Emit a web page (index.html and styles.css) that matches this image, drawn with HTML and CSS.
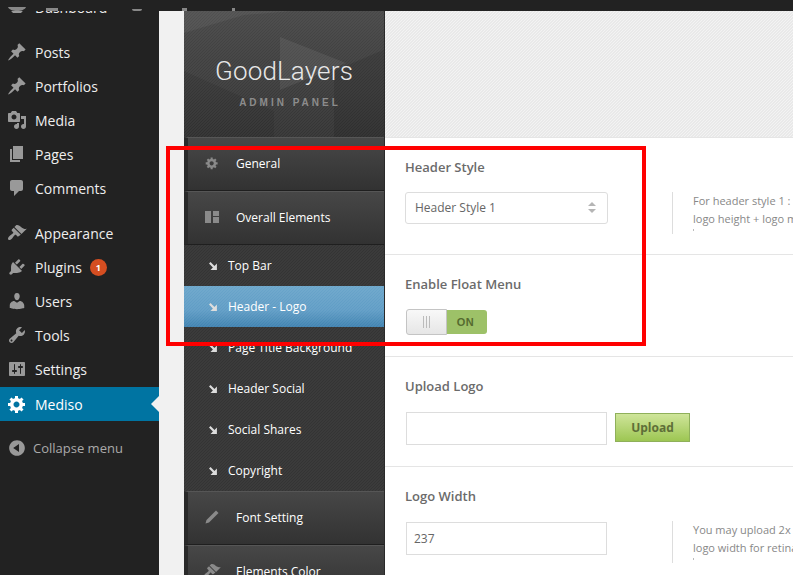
FILE: index.html
```html
<!DOCTYPE html>
<html lang="en">
<head>
  <meta charset="UTF-8" />
  <title>GoodLayers Admin Panel</title>
  <link rel="stylesheet" href="styles.css">
</head>
<body>
  <svg class="defs" width="0" height="0">
    <symbol id="i-pin" viewBox="0 0 20 20"><path d="M10.44 3.02l1.82-1.82 6.36 6.35-1.83 1.82c-1.05-.68-2.48-.57-3.41.36l-.75.75c-.92.93-1.04 2.35-.35 3.41l-1.83 1.82-2.41-2.41-2.8 2.79c-.42.42-3.38 2.71-3.8 2.29s1.86-3.39 2.28-3.81l2.79-2.79L4.1 9.36l1.83-1.82c1.05.69 2.48.57 3.4-.36l.75-.75c.93-.92 1.05-2.35.36-3.41z"/></symbol>
    <symbol id="i-gear" viewBox="0 0 20 20"><path fill-rule="evenodd" d="M18 12h-2.18c-.17.7-.44 1.35-.81 1.93l1.54 1.54-2.1 2.1-1.54-1.54c-.58.36-1.23.63-1.91.79V19H8v-2.18c-.68-.16-1.33-.43-1.91-.79l-1.54 1.54-2.12-2.12 1.54-1.54c-.36-.58-.63-1.23-.79-1.91H1V9.03h2.17c.16-.7.44-1.35.8-1.94L2.43 5.55l2.1-2.1 1.54 1.54c.58-.37 1.24-.64 1.93-.81V2h3v2.18c.68.16 1.33.43 1.91.79l1.54-1.54 2.12 2.12-1.54 1.54c.36.59.64 1.24.8 1.94H18V12zm-8.5 1.5c1.66 0 3-1.34 3-3s-1.34-3-3-3-3 1.34-3 3 1.34 3 3 3z"/></symbol>
    <symbol id="i-arrow" viewBox="0 0 8 8"><path d="M0 1.5L1.5 0l4 4L7.9 1.6V8H1.5l2.4-2.4z"/></symbol>
    <symbol id="i-brush" viewBox="0 0 20 20"><path d="M14.5 11L7.4 4l1.5-1.5c.5-.6 2.3-.5 3.5.3s1.4 1.3 2.9 2.1c1.2.6 2.5 1.3 4.5.9zm-.7.8L6.7 4.7 4.9 6.5c-.4.4-.4 1 0 1.4L6 8.9c.4.4.4 1 0 1.4-1 1-2.2 1.600-3.200 2.500-1.400 1.300-2.400 2.900-1.400 3.900s2.600 0 3.900-1.400c.9-1 1.500-2.200 2.500-3.200.4-.4 1-.4 1.400 0l1 1.100c.4.4 1 .4 1.400 0z"/></symbol>
  </svg>

  <header class="topbar">
    <svg class="top-icon top-wp" width="18" height="4" viewBox="0 0 18 4"><path d="M0 0h18c-1 2.500-4.500 4-9 4S1 2.500 0 0z"/></svg>
    <span class="top-icon top-home"></span>
    <span class="top-icon top-bubble"></span>
    <span class="top-icon top-pen"></span>
    <span class="top-icon top-plus"></span>
  </header>

  <div class="wrap">
    <nav class="sidebar">
      <ul class="menu">
        <li class="menu-first"><svg class="ico" viewBox="0 0 20 20"><path d="M3 10a7 7 0 0 1 14 0c0 2.500-1.300 4.600-3 6H6c-1.700-1.400-3-3.500-3-6z"/></svg><span>Dashboard</span></li>
        <li class="group-start"><svg class="ico"><use href="#i-pin"/></svg><span>Posts</span></li>
        <li><svg class="ico"><use href="#i-pin"/></svg><span>Portfolios</span></li>
        <li><svg class="ico" viewBox="0 0 20 20"><path fill-rule="evenodd" d="M13 11V4c0-.55-.45-1-1-1h-1.670L9 1H5L3.670 3H2c-.55 0-1 .45-1 1v7c0 .55.45 1 1 1h10c.55 0 1-.45 1-1zM7 4.500c1.380 0 2.500 1.120 2.500 2.500S8.380 9.500 7 9.500 4.500 8.380 4.500 7 5.620 4.500 7 4.500zM14 6h5v10.500c0 1.380-1.120 2.500-2.500 2.500S14 17.880 14 16.500s1.120-2.500 2.500-2.500c.17 0 .34.02.5.05V9h-3V6zm-4 8.050V13h2v3.500c0 1.380-1.120 2.500-2.500 2.500S7 17.880 7 16.500 8.120 14 9.500 14c.17 0 .34.02.5.05z"/></svg><span>Media</span></li>
        <li><svg class="ico" viewBox="0 0 20 20"><path d="M6 15V2h10v13H6zm-1 1h8v2H3V5h2v11z"/></svg><span>Pages</span></li>
        <li><svg class="ico" viewBox="0 0 20 20"><path d="M5 2h9c1.100 0 2 .9 2 2v7c0 1.100-.9 2-2 2h-2l-5 5v-5H5c-1.100 0-2-.9-2-2V4c0-1.100.9-2 2-2z"/></svg><span>Comments</span></li>
        <li class="group-start"><svg class="ico"><use href="#i-brush"/></svg><span>Appearance</span></li>
        <li><svg class="ico" viewBox="0 0 20 20"><path d="M13.110 4.360L9.870 7.600 8 5.730l3.240-3.240c.35-.34 1.050-.2 1.560.32.52.51.66 1.210.31 1.550zm-8 1.770l.91-1.120 9.010 9.010-1.190.84c-.71.71-2.630 1.160-3.820 1.160H6.140L4.900 17.260c-.59.59-1.540.59-2.120 0-.59-.58-.59-1.530 0-2.120l1.240-1.240v-3.880c0-1.130.4-3.190 1.090-3.890zm7.260 3.970l3.240-3.240c.34-.35 1.040-.21 1.550.31.52.51.66 1.210.31 1.550l-3.240 3.250z"/></svg><span>Plugins</span><b class="badge">1</b></li>
        <li><svg class="ico" viewBox="0 0 20 20"><path d="M10 9.250c-2.270 0-2.730-3.440-2.730-3.440C7 4.020 7.820 2 9.970 2c2.160 0 2.980 2.020 2.710 3.810 0 0-.41 3.440-2.680 3.440zm0 2.570L12.720 10c2.390 0 4.520 2.330 4.520 4.530v2.490s-3.650 1.130-7.240 1.130c-3.650 0-7.240-1.130-7.240-1.130v-2.490c0-2.250 1.940-4.480 4.470-4.480z"/></svg><span>Users</span></li>
        <li><svg class="ico" viewBox="0 0 20 20"><path fill-rule="evenodd" d="M16.680 9.770c-1.340 1.340-3.300 1.670-4.950.99l-5.410 6.520c-.99.99-2.590.99-3.580 0s-.99-2.590 0-3.570l6.520-5.420c-.68-1.650-.35-3.610.99-4.950 1.280-1.280 3.120-1.620 4.720-1.060l-2.890 2.890 2.820 2.820 2.860-2.870c.53 1.580.18 3.390-1.080 4.650zM3.810 16.210c.4.39 1.040.39 1.430 0 .4-.4.4-1.040 0-1.430-.39-.4-1.030-.4-1.430 0-.39.39-.39 1.030 0 1.430z"/></svg><span>Tools</span></li>
        <li><svg class="ico" viewBox="0 0 20 20"><path fill-rule="evenodd" d="M18 16V4c0-.55-.45-1-1-1H3c-.55 0-1 .45-1 1v12c0 .55.45 1 1 1h14c.55 0 1-.45 1-1zM8 11h1c.55 0 1 .45 1 1s-.45 1-1 1H8v1.500c0 .28-.22.5-.5.5s-.5-.22-.5-.5V13H6c-.55 0-1-.45-1-1s.45-1 1-1h1V5.500c0-.28.22-.5.5-.5s.5.22.5.5V11zm5-2h-1c-.55 0-1-.45-1-1s.45-1 1-1h1V5.500c0-.28.22-.5.5-.5s.5.22.5.5V7h1c.55 0 1 .45 1 1s-.45 1-1 1h-1v5.500c0 .28-.22.5-.5.5s-.5-.22-.5-.5V9z"/></svg><span>Settings</span></li>
        <li class="current"><svg class="ico"><use href="#i-gear"/></svg><span>Mediso</span></li>
        <li class="collapse"><svg class="ico" viewBox="0 0 20 20"><path fill-rule="evenodd" d="M10 2.160c4.330 0 7.840 3.510 7.840 7.840s-3.510 7.840-7.840 7.840S2.160 14.330 2.160 10 5.710 2.160 10 2.160zm2 11.720V6.120L6.180 9.970z"/></svg><span>Collapse menu</span></li>
      </ul>
    </nav>

    <div class="panel">
      <aside class="panel-nav">
        <div class="logo">
          <svg class="logo-bg" width="201" height="126" viewBox="0 0 201 126">
            <path d="M0 22L60 4 110 0H0z" fill="#fff" opacity=".05"/>
            <path d="M96 26l66 26-66 27z" fill="#fff" opacity=".07"/>
            <path d="M0 60l90 40v26H0z" fill="#000" opacity=".08"/>
            <path d="M150 60l51-22v88h-51z" fill="#000" opacity=".1"/>
          </svg>
          <div class="logo-name">GoodLayers</div>
          <div class="logo-sub">ADMIN PANEL</div>
        </div>

        <div class="nav-head">
          <svg class="nav-ico"><use href="#i-gear"/></svg><span>General</span>
        </div>
        <div class="nav-head">
          <svg class="nav-ico" viewBox="0 0 14 14"><path d="M0 1h6v12H0zM8 1h6v5H8zM8 7h6v6H8z"/></svg><span>Overall Elements</span>
        </div>
        <div class="nav-sub"><svg class="sub-ico"><use href="#i-arrow"/></svg><span>Top Bar</span></div>
        <div class="nav-sub active"><svg class="sub-ico"><use href="#i-arrow"/></svg><span>Header - Logo</span></div>
        <div class="nav-sub"><svg class="sub-ico"><use href="#i-arrow"/></svg><span>Page Title Background</span></div>
        <div class="nav-sub"><svg class="sub-ico"><use href="#i-arrow"/></svg><span>Header Social</span></div>
        <div class="nav-sub"><svg class="sub-ico"><use href="#i-arrow"/></svg><span>Social Shares</span></div>
        <div class="nav-sub"><svg class="sub-ico"><use href="#i-arrow"/></svg><span>Copyright</span></div>
        <div class="nav-head">
          <svg class="nav-ico" viewBox="0 0 14 14"><path d="M11 .5L13.500 3 4 12.500 .5 13.500 1.500 10z"/></svg><span>Font Setting</span>
        </div>
        <div class="nav-head">
          <svg class="nav-ico nav-ico-big"><use href="#i-brush"/></svg><span>Elements Color</span>
        </div>
      </aside>

      <main class="panel-main">
        <div class="panel-top"></div>

        <section class="row">
          <h3>Header Style</h3>
          <div class="row-body">
            <div class="control">
              <div class="select">
                <span>Header Style 1</span>
                <svg class="select-arrows" width="8" height="11" viewBox="0 0 8 11"><path d="M4 0l4 4H0zM0 7h8l-4 4z"/></svg>
              </div>
            </div>
            <div class="desc">For header style 1 :<br>logo height + logo margin<i class="tick"></i></div>
          </div>
        </section>

        <section class="row row-toggle">
          <h3>Enable Float Menu</h3>
          <div class="toggle">
            <div class="toggle-knob"><i></i><i></i><i></i></div>
            <div class="toggle-on">ON</div>
          </div>
        </section>

        <section class="row row-toggle">
          <h3>Upload Logo</h3>
          <div class="upload">
            <input class="text-input" type="text">
            <button class="upload-btn">Upload</button>
          </div>
        </section>

        <section class="row">
          <h3>Logo Width</h3>
          <div class="row-body row-body-input">
            <div class="control">
              <input class="text-input" type="text" value="237">
            </div>
            <div class="desc">You may upload 2x<br>logo width for retina<i class="tick"></i></div>
          </div>
        </section>
      </main>
    </div>
  </div>

  <div class="highlight"></div>
</body>
</html>
```

FILE: styles.css
```css
* {
  box-sizing: border-box;
}

html,
body {
  height: 100%;
}

body {
  margin: 0;
  height: 575px;
  overflow: hidden;
  position: relative;
  background: #f1f1f1;
  font-family: 'Open Sans', sans-serif;
  color: #666;
}

.defs {
  position: absolute;
}

/* top bar, only the bottom of it is still on screen */
.topbar {
  height: 11px;
  background: #222;
  position: relative;
  z-index: 5;
  overflow: hidden;
}

.top-icon {
  position: absolute;
  bottom: 0;
  fill: #888;
}

.top-wp {
  left: 8px;
}

.top-home {
  left: 46px;
  width: 12px;
  height: 3px;
  background: #888;
}

.top-bubble {
  left: 132px;
  width: 10px;
  height: 2px;
  background: #888;
  border-radius: 0 0 5px 5px;
}

.top-pen {
  left: 182px;
  width: 5px;
  height: 3px;
  background: #888;
}

.top-plus {
  left: 232px;
  width: 3px;
  height: 3px;
  background: #888;
}

.wrap {
  display: flex;
  height: 564px;
}

/* wordpress sidebar */
.sidebar {
  width: 159px;
  flex: none;
  background: #222;
  overflow: hidden;
}

.menu {
  list-style: none;
  margin: -21px 0 0;
  padding: 0;
}

.menu li {
  height: 34px;
  display: flex;
  align-items: center;
  position: relative;
  padding-left: 7px;
  font-size: 14px;
  color: #eee;
}

.menu li.group-start {
  margin-top: 11px;
}

.ico {
  width: 20px;
  height: 20px;
  margin-right: 8px;
  fill: #999;
  flex: none;
}

.badge {
  width: 17px;
  height: 17px;
  margin-left: 8px;
  border-radius: 50%;
  background: #d54e21;
  color: #fff;
  font-size: 9px;
  line-height: 17px;
  text-align: center;
}

.menu li.current {
  margin-top: 1px;
  background: #0074a2;
  color: #fff;
}

.menu li.current .ico {
  fill: #fff;
}

.menu li.current::after {
  content: '';
  position: absolute;
  right: 0;
  top: 9px;
  border: 8px solid transparent;
  border-left: 0;
  border-right-color: #f1f1f1;
}

.menu li.collapse {
  margin-top: 10px;
  font-size: 13px;
  color: #aaa;
}

.menu li.collapse .ico {
  margin-right: 6px;
}

/* theme panel */
.panel {
  flex: 1;
  display: flex;
  margin-left: 25px;
  min-width: 0;
}

.panel-nav {
  width: 201px;
  flex: none;
  background-color: #343434;
  background-image: linear-gradient(135deg, rgba(255, 255, 255, 0.035) 25%, transparent 25%, transparent 50%, rgba(255, 255, 255, 0.035) 50%, rgba(255, 255, 255, 0.035) 75%, transparent 75%);
  background-size: 3px 3px;
  overflow: hidden;
  border-right: 1px solid #2a2a2a;
}

.logo {
  height: 126px;
  position: relative;
  text-align: center;
  overflow: hidden;
  background-image: linear-gradient(135deg, rgba(255, 255, 255, 0.04) 25%, transparent 25%, transparent 50%, rgba(255, 255, 255, 0.04) 50%, rgba(255, 255, 255, 0.04) 75%, transparent 75%), linear-gradient(#484848, #343434);
  background-size: 3px 3px, 100% 100%;
}

.logo-bg {
  position: absolute;
  left: 0;
  top: 0;
}

.logo-name {
  position: relative;
  padding-top: 44px;
  font-family: Roboto, sans-serif;
  font-weight: 300;
  font-size: 26px;
  line-height: 32px;
  letter-spacing: 0.15px;
  color: #e8e8e8;
}

.logo-sub {
  position: relative;
  margin-top: 9px;
  padding-left: 12px;
  font-family: 'Liberation Sans', sans-serif;
  font-weight: 700;
  font-size: 10px;
  line-height: 14px;
  letter-spacing: 3px;
  color: #8c8c8c;
}

.nav-head {
  height: 54px;
  display: flex;
  align-items: center;
  padding: 0 0 2px 17px;
  border-top: 1px solid #565656;
  border-bottom: 1px solid #1f1f1f;
  border-left: 4px solid #2a2a2a;
  background: linear-gradient(#474747, #323232);
  color: #fff;
  font-size: 12px;
}

.nav-ico {
  width: 14px;
  height: 14px;
  margin-right: 17px;
  flex: none;
  fill: #8a8a8a;
}

.nav-ico-big {
  width: 18px;
  height: 18px;
  margin-left: -2px;
  margin-right: 15px;
}

.nav-sub {
  height: 41px;
  display: flex;
  align-items: center;
  padding-left: 25px;
  color: #fff;
  font-size: 12px;
}

.sub-ico {
  width: 8px;
  height: 8px;
  margin-right: 11px;
  flex: none;
  fill: #ddd;
}

.nav-sub.active {
  background-image: linear-gradient(135deg, rgba(255, 255, 255, 0.05) 25%, transparent 25%, transparent 50%, rgba(255, 255, 255, 0.05) 50%, rgba(255, 255, 255, 0.05) 75%, transparent 75%), linear-gradient(#6aa5ca 0%, #5f9cc5 60%, #3f82b0 100%);
  background-size: 3px 3px, 100% 100%;
}

.panel-main {
  flex: 1;
  min-width: 0;
  background: #fff;
  overflow: hidden;
}

.panel-top {
  height: 127px;
  background-color: #f3f3f3;
  background-image: linear-gradient(135deg, #e9e9e9 25%, transparent 25%, transparent 50%, #e9e9e9 50%, #e9e9e9 75%, transparent 75%);
  background-size: 3px 3px;
  border-bottom: 1px solid #e5e5e5;
}

.row {
  padding: 20px 0 20px 20px;
  border-bottom: 1px solid #e5e5e5;
}

.row-toggle {
  padding-bottom: 21px;
}

.row h3 {
  margin: 0 0 16px;
  font-size: 13px;
  line-height: 18px;
  font-weight: 600;
  color: #6b6b6b;
}

.row-body {
  display: flex;
}

.control {
  width: 267px;
  flex: none;
}

.select {
  width: 203px;
  height: 32px;
  display: flex;
  align-items: center;
  justify-content: space-between;
  padding: 0 11px 2px 9px;
  border: 1px solid #ddd;
  border-radius: 3px;
  font-size: 12px;
  color: #666;
}

.select-arrows {
  fill: #b5b5b5;
}

.desc {
  position: relative;
  height: 42px;
  padding-left: 20px;
  border-left: 1px solid #ddd;
  font-size: 11px;
  line-height: 18px;
  color: #888;
  white-space: nowrap;
}

.tick {
  position: absolute;
  left: 20px;
  top: 37px;
  width: 1px;
  height: 2px;
  background: #bbb;
}

.toggle {
  width: 81px;
  height: 26px;
  margin-left: 1px;
  display: flex;
}

.toggle-knob {
  width: 41px;
  display: flex;
  align-items: center;
  justify-content: center;
  gap: 2px;
  border: 1px solid #c4c4c4;
  border-radius: 3px 0 0 3px;
  background: linear-gradient(#f8f8f8, #e6e6e6);
}

.toggle-knob i {
  width: 1px;
  height: 12px;
  background: #bbb;
}

.toggle-on {
  flex: 1;
  margin: 1px 0;
  padding-right: 3px;
  text-align: center;
  font-family: 'Liberation Sans', sans-serif;
  font-weight: 700;
  font-size: 11px;
  line-height: 24px;
  letter-spacing: 0.5px;
  color: #556b2f;
  background: #9dc168;
  border-radius: 0 3px 3px 0;
}

.upload {
  display: flex;
  align-items: flex-start;
  gap: 8px;
  padding: 1px 0 0 1px;
}

.row-body-input .text-input {
  margin: 1px 0 0 1px;
}

.text-input {
  width: 201px;
  height: 33px;
  margin: 0;
  padding: 0 7px;
  border: 1px solid #ddd;
  background: #fff;
  font-family: 'Open Sans', sans-serif;
  font-size: 12px;
  color: #666;
  outline: none;
}

.upload-btn {
  width: 75px;
  height: 29px;
  margin-top: 1px;
  padding: 0;
  border: 1px solid #8fb05a;
  background: linear-gradient(#cfe59a, #9dc653);
  font-family: 'Open Sans', sans-serif;
  font-weight: 700;
  font-size: 12px;
  color: #5e6e38;
}

/* red annotation drawn over the screenshot */
.highlight {
  position: absolute;
  left: 166px;
  top: 146px;
  width: 480px;
  height: 200px;
  border: 4px solid #f00;
  z-index: 10;
}
```
